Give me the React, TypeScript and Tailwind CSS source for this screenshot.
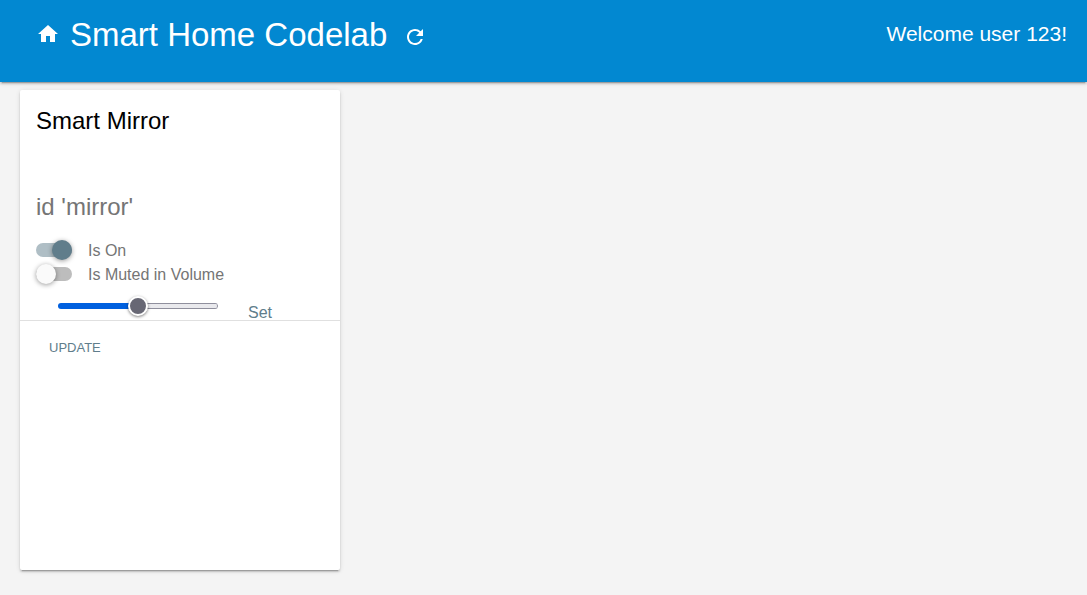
import { useState } from "react";
import type { CSSProperties } from "react";

function HomeIcon() {
  return (
    <svg viewBox="0 0 24 24" className="size-6 fill-current" aria-hidden="true">
      <path d="M10 20v-6h4v6h5v-8h3L12 3 2 12h3v8z" />
    </svg>
  );
}

function RefreshIcon() {
  return (
    <svg viewBox="0 0 24 24" className="size-6 fill-current" aria-hidden="true">
      <path d="M17.65 6.35A7.958 7.958 0 0 0 12 4c-4.42 0-7.99 3.58-7.99 8s3.57 8 7.99 8c3.73 0 6.84-2.55 7.73-6h-2.08A5.99 5.99 0 0 1 12 18c-3.31 0-6-2.69-6-6s2.69-6 6-6c1.66 0 3.14.69 4.22 1.78L13 11h7V4l-2.35 2.35z" />
    </svg>
  );
}

type ToggleProps = {
  id: string;
  label: string;
  checked: boolean;
  onChange: (value: boolean) => void;
};

function Toggle({ id, label, checked, onChange }: ToggleProps) {
  return (
    <div className="flex h-6 items-center gap-4">
      <input
        id={id}
        type="checkbox"
        role="switch"
        checked={checked}
        onChange={(e) => onChange(e.target.checked)}
        className="relative h-3.5 w-9 shrink-0 cursor-pointer appearance-none rounded-full bg-[#bdbdbd] before:absolute before:-top-[3px] before:left-0 before:size-5 before:rounded-full before:bg-[#fafafa] before:shadow-[0_1px_5px_rgba(0,0,0,0.4)] before:content-[''] checked:bg-[#afbec5] checked:before:left-4 checked:before:bg-[#607d8b]"
      />
      <label htmlFor={id} className="cursor-pointer pt-0.5 text-base leading-6">
        {label}
      </label>
    </div>
  );
}

function VolumeSlider() {
  const [volume, setVolume] = useState(50);
  return (
    <input
      type="range"
      aria-label="Volume"
      min={0}
      max={100}
      value={volume}
      onChange={(e) => setVolume(Number(e.target.value))}
      style={{ "--fill": `${volume}%` } as CSSProperties}
      className="h-5 w-40 cursor-pointer appearance-none bg-transparent [&::-webkit-slider-runnable-track]:h-1.5 [&::-webkit-slider-runnable-track]:rounded-full [&::-webkit-slider-runnable-track]:bg-[linear-gradient(to_right,#0060df_var(--fill),transparent_var(--fill)),linear-gradient(#8f8f9d_1px,#e9e9ed_1px,#e9e9ed_5px,#8f8f9d_5px)] [&::-webkit-slider-runnable-track]:shadow-[inset_-1px_0_0_#8f8f9d] [&::-webkit-slider-thumb]:-mt-[7px] [&::-webkit-slider-thumb]:size-5 [&::-webkit-slider-thumb]:appearance-none [&::-webkit-slider-thumb]:rounded-full [&::-webkit-slider-thumb]:border-2 [&::-webkit-slider-thumb]:border-white [&::-webkit-slider-thumb]:bg-[#676774] [&::-webkit-slider-thumb]:shadow-[0_1px_3px_rgba(0,0,0,0.5)]"
    />
  );
}

function DeviceCard() {
  const [isOn, setIsOn] = useState(true);
  const [isMuted, setIsMuted] = useState(false);
  return (
    <article className="min-h-[480px] w-80 rounded-xs bg-white text-[#757575] shadow-[0_2px_2px_rgba(0,0,0,0.14),0_1px_5px_rgba(0,0,0,0.12),0_3px_1px_-2px_rgba(0,0,0,0.2)]">
      <div className="border-b border-[#e0e0e0] px-4 pt-4">
        <h2 className="text-2xl leading-[30px] text-black">Smart Mirror</h2>
        <p className="mt-14 mb-4 text-2xl leading-[30px]">id 'mirror'</p>
        <Toggle id="is-on" label="Is On" checked={isOn} onChange={setIsOn} />
        <Toggle
          id="is-muted"
          label="Is Muted in Volume"
          checked={isMuted}
          onChange={setIsMuted}
        />
        <div className="flex h-[34px] items-start gap-[30px] pt-2.5 pl-[22px]">
          <VolumeSlider />
          <button
            type="button"
            className="cursor-pointer pt-2 text-base leading-[18px] text-[#607d8b]"
          >
            Set
          </button>
        </div>
      </div>
      <div className="p-2">
        <button
          type="button"
          className="h-[38px] cursor-pointer px-[21px] text-[13px] text-[#607d8b] uppercase"
        >
          Update
        </button>
      </div>
    </article>
  );
}

export default function App() {
  return (
    <div className="flex min-h-screen flex-col bg-[#f4f4f4] font-['Liberation_Sans',Arial,sans-serif]">
      <header className="relative flex items-start justify-between bg-[#0288d1] pt-3.5 pr-5 pb-7 pl-9 text-white shadow-[0_2px_2px_rgba(0,0,0,0.14),0_1px_5px_rgba(0,0,0,0.12),0_3px_1px_-2px_rgba(0,0,0,0.2)]">
        <div className="flex h-10 items-center">
          <HomeIcon />
          <h1 className="ml-2.5 pt-0.5 text-[33px] leading-10">
            Smart Home Codelab
          </h1>
          <button
            type="button"
            aria-label="Refresh"
            className="mt-1.5 ml-4 cursor-pointer"
          >
            <RefreshIcon />
          </button>
        </div>
        <p className="text-[21px] leading-10">Welcome user 123!</p>
      </header>
      <main className="px-5 pt-2 pb-6">
        <DeviceCard />
      </main>
    </div>
  );
}
